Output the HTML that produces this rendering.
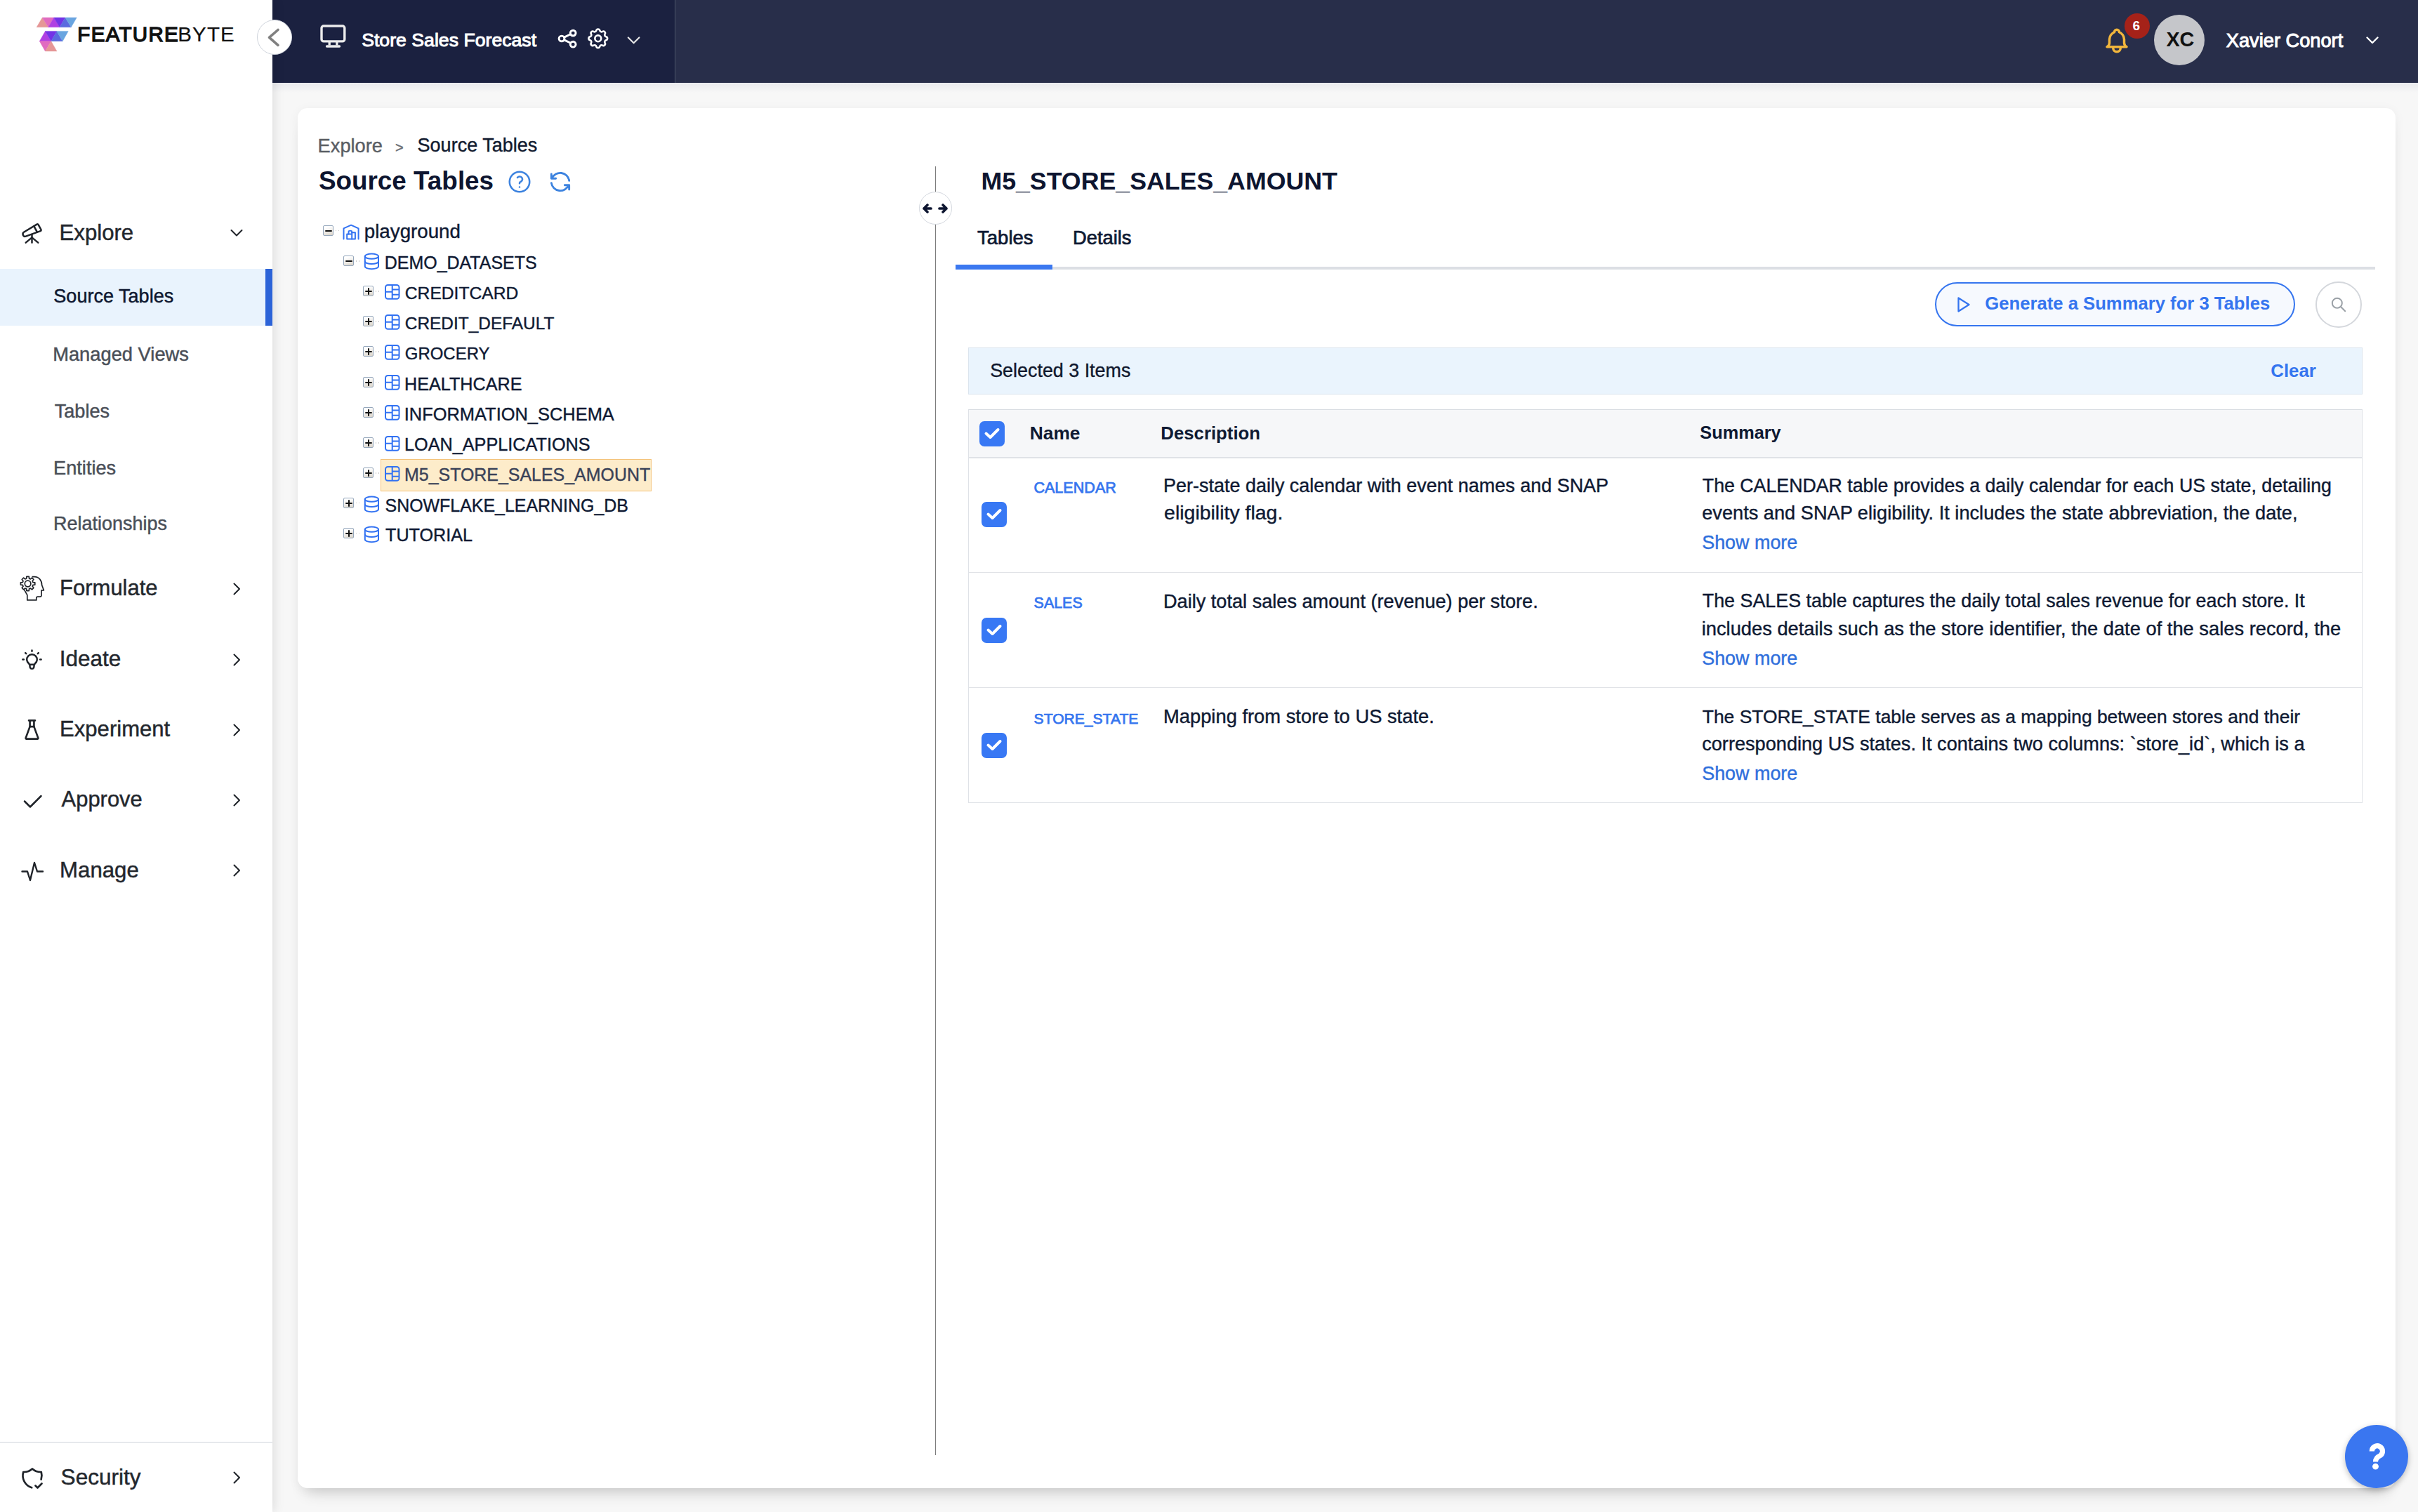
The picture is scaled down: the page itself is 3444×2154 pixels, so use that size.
<!DOCTYPE html>
<html><head><meta charset="utf-8"><title>Source Tables</title>
<style>
html,body{margin:0;padding:0;}
body{width:3444px;height:2154px;overflow:hidden;background:#f7f7f7;position:relative;font-family:"Liberation Sans", sans-serif;}
.t{position:absolute;white-space:nowrap;line-height:1;font-family:"Liberation Sans", sans-serif;}
svg{overflow:visible}
</style></head><body>
<div style="position:absolute;left:388px;top:118px;width:3056px;height:14px;background:linear-gradient(#e9eaee,#f7f7f7)"></div>
<div style="position:absolute;left:424px;top:154px;width:2988px;height:1966px;background:#fff;border-radius:14px;box-shadow:0 3px 16px rgba(0,0,0,0.055),0 18px 22px -12px rgba(0,0,0,0.16)"></div>
<div style="position:absolute;left:388px;top:0px;width:573px;height:118px;background:#1b2140"></div>
<div style="position:absolute;left:961px;top:0px;width:1px;height:118px;background:#4e566b"></div>
<div style="position:absolute;left:962px;top:0px;width:2482px;height:118px;background:#282e4a"></div>
<svg style="position:absolute;left:450px;top:30px;" width="50" height="45" viewBox="450 30 50 45"><rect x="458" y="37" width="32.8" height="21.9" rx="3" fill="none" stroke="#ececec" stroke-width="3.4"/><path d="M469.2 59v5.5M479.9 59v5.5" stroke="#ececec" stroke-width="3.3" fill="none"/><path d="M465.5 66h18" stroke="#ececec" stroke-width="3.3" stroke-linecap="round" fill="none"/></svg>
<div class="t" style="left:515.2px;top:43.9px;font-size:26.67px;font-weight:400;color:#ffffff;-webkit-text-stroke:1.0px #ffffff;">Store Sales Forecast</div>
<svg style="position:absolute;left:780px;top:30px;" width="50" height="50" viewBox="780 30 50 50"><g fill="none" stroke="#fff" stroke-width="2.9"><circle cx="816.2" cy="47.1" r="3.9"/><circle cx="800" cy="55" r="3.9"/><circle cx="816.2" cy="63.2" r="3.9"/><path d="M803.6 53.1l9-4.4M803.6 56.9l9 4.4"/></g></svg>
<svg style="position:absolute;left:834.2px;top:37.2px;" width="35.6" height="35.6" viewBox="0 0 24 24"><g fill="none" stroke="#fff" stroke-width="1.75" stroke-linecap="round" stroke-linejoin="round"><path d="M10.325 4.317c.426 -1.756 2.924 -1.756 3.35 0a1.724 1.724 0 0 0 2.573 1.066c1.543 -.94 3.31 .826 2.37 2.37a1.724 1.724 0 0 0 1.065 2.572c1.756 .426 1.756 2.924 0 3.35a1.724 1.724 0 0 0 -1.066 2.573c.94 1.543 -.826 3.31 -2.37 2.37a1.724 1.724 0 0 0 -2.572 1.065c-.426 1.756 -2.924 1.756 -3.35 0a1.724 1.724 0 0 0 -2.573 -1.066c-1.543 .94 -3.31 -.826 -2.37 -2.37a1.724 1.724 0 0 0 -1.065 -2.572c-1.756 -.426 -1.756 -2.924 0 -3.35a1.724 1.724 0 0 0 1.066 -2.573c-.94 -1.543 .826 -3.31 2.37 -2.37c1 .608 2.296 .07 2.572 -1.065z"/><circle cx="12" cy="12" r="3"/></g></svg>
<svg style="position:absolute;left:880px;top:40px;" width="40" height="30" viewBox="880 40 40 30"><path d="M894.8 53.5l7.8 7.8l7.8-7.8" fill="none" stroke="#e6e6e6" stroke-width="2.2" stroke-linecap="round" stroke-linejoin="round"/></svg>
<svg style="position:absolute;left:2994px;top:37px;" width="42" height="42" viewBox="0 0 24 24"><g fill="none" stroke="#f2b63c" stroke-width="2" stroke-linecap="round" stroke-linejoin="round"><path d="M10 5a2 2 0 1 1 4 0a7 7 0 0 1 4 6v3a4 4 0 0 0 2 3h-16a4 4 0 0 0 2 -3v-3a7 7 0 0 1 4 -6"/><path d="M9 17v1a3 3 0 0 0 6 0v-1"/></g></svg>
<div style="position:absolute;left:3026px;top:19px;width:36px;height:36px;border-radius:50%;background:#a52219"></div>
<div class="t" style="left:3037.5px;top:27.4px;font-size:19.00px;font-weight:700;color:#ffffff;">6</div>
<div style="position:absolute;left:3068px;top:21px;width:72px;height:72px;border-radius:50%;background:#c5c6ca"></div>
<div class="t" style="left:3085.4px;top:42.2px;font-size:28.82px;font-weight:700;color:#111111;">XC</div>
<div class="t" style="left:3170.8px;top:43.5px;font-size:27.23px;font-weight:400;color:#ffffff;-webkit-text-stroke:1.0px #ffffff;">Xavier Conort</div>
<svg style="position:absolute;left:3367px;top:49px;" width="24" height="17" viewBox="0 0 24 17"><path d="M4.5 4.5l7.5 7.5l7.5-7.5" fill="none" stroke="#fff" stroke-width="2.4" stroke-linecap="round" stroke-linejoin="round"/></svg>
<div style="position:absolute;left:0;top:0;width:388px;height:2154px;background:#fff;box-shadow:3px 0 14px rgba(0,0,0,0.10)"></div>
<svg style="position:absolute;left:0px;top:0px;" width="120" height="80" viewBox="0 0 120 80"><path d="M52.1 38.8L60.3 25.1L68.8 38.8Z" fill="#e59797" stroke="#e59797" stroke-width="0.4"/><path d="M60.3 25.1L76.7 25.1L68.8 38.8Z" fill="#e06bc0" stroke="#e06bc0" stroke-width="0.4"/><path d="M68.8 38.8L76.7 25.1L84.9 38.8Z" fill="#b040e2" stroke="#b040e2" stroke-width="0.4"/><path d="M76.7 25.1L93 25.1L84.9 38.8Z" fill="#7333e6" stroke="#7333e6" stroke-width="0.4"/><path d="M84.9 38.8L93 25.1L101.3 38.8Z" fill="#5b6adf" stroke="#5b6adf" stroke-width="0.4"/><path d="M93 25.1L109.3 25.1L101.3 38.8Z" fill="#6aa5e0" stroke="#6aa5e0" stroke-width="0.4"/><path d="M56.3 58.7L64.4 44.4L72.8 58.7Z" fill="#b040e2" stroke="#b040e2" stroke-width="0.4"/><path d="M64.4 44.4L80.9 44.4L72.8 58.7Z" fill="#7333e6" stroke="#7333e6" stroke-width="0.4"/><path d="M72.8 58.7L80.9 44.4L89.2 58.7Z" fill="#5b6adf" stroke="#5b6adf" stroke-width="0.4"/><path d="M80.9 44.4L97.2 44.4L89.2 58.7Z" fill="#6aa5e0" stroke="#6aa5e0" stroke-width="0.4"/><path d="M56.3 58.7L72.8 58.7L64.4 73Z" fill="#e06bc0" stroke="#e06bc0" stroke-width="0.4"/><path d="M64.4 73L72.8 58.7L81 73Z" fill="#e59797" stroke="#e59797" stroke-width="0.4"/></svg>
<div class="t" style="left:110.3px;top:33.9px;font-size:29.50px;font-weight:400;color:#111111;-webkit-text-stroke:1.4px #111111;letter-spacing:1.33px;">FEATURE</div>
<div class="t" style="left:253.3px;top:33.9px;font-size:29.50px;font-weight:400;color:#111111;-webkit-text-stroke:0.2px #111111;letter-spacing:1.13px;">BYTE</div>
<div style="position:absolute;left:366px;top:28px;width:48px;height:48px;border-radius:50%;background:#fff;border:1px solid #cfd4dc"></div>
<svg style="position:absolute;left:370px;top:33px;" width="40" height="40" viewBox="370 33 40 40"><path d="M396 42.5l-12.5 10.8l12.5 11" fill="none" stroke="#808080" stroke-width="3.6" stroke-linecap="round" stroke-linejoin="round"/></svg>
<svg style="position:absolute;left:28px;top:315px;" width="35" height="35" viewBox="0 0 24 24"><g fill="none" stroke="#1f2329" stroke-width="1.7" stroke-linecap="round" stroke-linejoin="round"><path d="M6 21l6 -5l6 5"/><path d="M12 13v8"/><path d="M3.294 13.678l.166 .281c.52 .88 1.624 1.265 2.605 .91l14.242 -5.165a1.023 1.023 0 0 0 .565 -1.456l-2.62 -4.705a1.087 1.087 0 0 0 -1.447 -.42l-.056 .033l-12.694 7.618c-.88 .528 -1.179 1.667 -.76 2.904z"/><path d="M14 5l3 5.5"/></g></svg>
<div class="t" style="left:84.5px;top:316.2px;font-size:31.18px;font-weight:400;color:#23272d;-webkit-text-stroke:0.45px #23272d;">Explore</div>
<svg style="position:absolute;left:326px;top:322px;" width="22" height="20" viewBox="0 0 22 20"><path d="M3.5 6l7.5 7.5l7.5-7.5" fill="none" stroke="#1f2329" stroke-width="2" stroke-linecap="round" stroke-linejoin="round"/></svg>
<div style="position:absolute;left:0px;top:383px;width:388px;height:81px;background:#e9f3fd"></div>
<div style="position:absolute;left:378px;top:383px;width:10px;height:81px;background:#2c63d8"></div>
<div class="t" style="left:76.3px;top:409.1px;font-size:27.05px;font-weight:400;color:#0e1730;-webkit-text-stroke:0.45px #0e1730;">Source Tables</div>
<div class="t" style="left:75.2px;top:490.9px;font-size:27.31px;font-weight:400;color:#4a4f58;-webkit-text-stroke:0.45px #4a4f58;">Managed Views</div>
<div class="t" style="left:77.7px;top:571.5px;font-size:27.14px;font-weight:400;color:#4a4f58;-webkit-text-stroke:0.45px #4a4f58;">Tables</div>
<div class="t" style="left:76.1px;top:652.5px;font-size:27.17px;font-weight:400;color:#4a4f58;-webkit-text-stroke:0.45px #4a4f58;">Entities</div>
<div class="t" style="left:76.1px;top:733.2px;font-size:26.96px;font-weight:400;color:#4a4f58;-webkit-text-stroke:0.45px #4a4f58;">Relationships</div>
<div class="t" style="left:85.1px;top:822.4px;font-size:30.99px;font-weight:400;color:#23272d;-webkit-text-stroke:0.45px #23272d;">Formulate</div>
<svg style="position:absolute;left:326px;top:827.0px;" width="22" height="24" viewBox="0 0 22 24"><path d="M7.5 4.5l7.5 7.5l-7.5 7.5" fill="none" stroke="#1f2329" stroke-width="2" stroke-linecap="round" stroke-linejoin="round"/></svg>
<div class="t" style="left:84.8px;top:922.7px;font-size:31.50px;font-weight:400;color:#23272d;-webkit-text-stroke:0.45px #23272d;">Ideate</div>
<svg style="position:absolute;left:326px;top:927.8px;" width="22" height="24" viewBox="0 0 22 24"><path d="M7.5 4.5l7.5 7.5l-7.5 7.5" fill="none" stroke="#1f2329" stroke-width="2" stroke-linecap="round" stroke-linejoin="round"/></svg>
<div class="t" style="left:85.1px;top:1023.3px;font-size:31.07px;font-weight:400;color:#23272d;-webkit-text-stroke:0.45px #23272d;">Experiment</div>
<svg style="position:absolute;left:326px;top:1028.0px;" width="22" height="24" viewBox="0 0 22 24"><path d="M7.5 4.5l7.5 7.5l-7.5 7.5" fill="none" stroke="#1f2329" stroke-width="2" stroke-linecap="round" stroke-linejoin="round"/></svg>
<div class="t" style="left:87.6px;top:1123.6px;font-size:30.93px;font-weight:400;color:#23272d;-webkit-text-stroke:0.45px #23272d;">Approve</div>
<svg style="position:absolute;left:326px;top:1128.2px;" width="22" height="24" viewBox="0 0 22 24"><path d="M7.5 4.5l7.5 7.5l-7.5 7.5" fill="none" stroke="#1f2329" stroke-width="2" stroke-linecap="round" stroke-linejoin="round"/></svg>
<div class="t" style="left:85.1px;top:1223.6px;font-size:31.19px;font-weight:400;color:#23272d;-webkit-text-stroke:0.45px #23272d;">Manage</div>
<svg style="position:absolute;left:326px;top:1228.4px;" width="22" height="24" viewBox="0 0 22 24"><path d="M7.5 4.5l7.5 7.5l-7.5 7.5" fill="none" stroke="#1f2329" stroke-width="2" stroke-linecap="round" stroke-linejoin="round"/></svg>
<svg style="position:absolute;left:20px;top:812px;" width="50" height="50" viewBox="0 0 50 50"><g fill="none" stroke="#1f2329" stroke-width="1.7" stroke-linejoin="round"><path d="M25.5 9.6 L29 9.6 C35.5 9.8 39.6 14.8 39.6 21.5 L42.4 28.9 L39 28.9 L39 36 Q39 38.2 36.8 38.2 L33.6 38.2 Q31.8 38.2 31.8 40 L31.8 42.9 L18.8 42.9 L18.8 35.6 L14.2 27.6"/><path d="M26.95 17.55 L29.76 17.81 L29.76 21.19 L26.95 21.45 L26.17 23.32 L27.98 25.49 L25.59 27.88 L23.42 26.07 L21.55 26.85 L21.29 29.66 L17.91 29.66 L17.65 26.85 L15.78 26.07 L13.61 27.88 L11.22 25.49 L13.03 23.32 L12.25 21.45 L9.44 21.19 L9.44 17.81 L12.25 17.55 L13.03 15.68 L11.22 13.51 L13.61 11.12 L15.78 12.93 L17.65 12.15 L17.91 9.34 L21.29 9.34 L21.55 12.15 L23.42 12.93 L25.59 11.12 L27.98 13.51 L26.17 15.68Z"/><circle cx="19.6" cy="19.5" r="4.3"/></g></svg>
<svg style="position:absolute;left:28px;top:922px;" width="35" height="35" viewBox="0 0 24 24"><g fill="none" stroke="#1f2329" stroke-width="1.7" stroke-linecap="round" stroke-linejoin="round"><path d="M3 12h1m8 -9v1m8 8h1m-15.4 -6.4l.7 .7m12.1 -.7l-.7 .7"/><path d="M9 16a5 5 0 1 1 6 0a3.5 3.5 0 0 0 -1 3a2 2 0 0 1 -4 0a3.5 3.5 0 0 0 -1 -3"/><path d="M9.7 17l4.6 0"/></g></svg>
<svg style="position:absolute;left:28px;top:1022px;" width="35" height="35" viewBox="0 0 24 24"><g fill="none" stroke="#1f2329" stroke-width="1.8" stroke-linecap="round" stroke-linejoin="round"><path d="M9 3l6 0"/><path d="M10 3v6l-4 11a.7 .7 0 0 0 .5 1h11a.7 .7 0 0 0 .5 -1l-4 -11v-6"/><path d="M10 9h4"/></g></svg>
<svg style="position:absolute;left:31px;top:1125px;" width="32" height="32" viewBox="0 0 32 32"><path d="M4 16.5l8 8l15.5-15.5" fill="none" stroke="#1f2329" stroke-width="2.5" stroke-linecap="round" stroke-linejoin="round"/></svg>
<svg style="position:absolute;left:29px;top:1225px;" width="34" height="34" viewBox="0 0 34 34"><path d="M2.5 16.5h7.5l4 12.5l6-25l4 12.5h8" fill="none" stroke="#1f2329" stroke-width="2.4" stroke-linecap="round" stroke-linejoin="round"/></svg>
<div style="position:absolute;left:0px;top:2053.5px;width:388px;height:1.5px;background:#cfd4db"></div>
<svg style="position:absolute;left:28px;top:2088px;" width="36" height="36" viewBox="0 0 24 24"><g fill="none" stroke="#1f2329" stroke-width="1.8" stroke-linecap="round" stroke-linejoin="round"><path d="M11.46 20.846a12 12 0 0 1 -7.96 -14.846a12 12 0 0 0 8.5 -3a12 12 0 0 0 8.5 3a12 12 0 0 1 -.09 7.06"/><path d="M15 19l2 2l4 -4"/></g></svg>
<div class="t" style="left:86.6px;top:2088.7px;font-size:31.55px;font-weight:400;color:#23272d;-webkit-text-stroke:0.45px #23272d;">Security</div>
<svg style="position:absolute;left:326px;top:2093px;" width="22" height="24" viewBox="0 0 22 24"><path d="M7.5 4.5l7.5 7.5l-7.5 7.5" fill="none" stroke="#1f2329" stroke-width="2" stroke-linecap="round" stroke-linejoin="round"/></svg>
<div class="t" style="left:452.6px;top:194.1px;font-size:27.24px;font-weight:400;color:#5a5e64;-webkit-text-stroke:0.4px #5a5e64;">Explore</div>
<div class="t" style="left:563.0px;top:200.1px;font-size:20.00px;font-weight:400;color:#6a6e74;-webkit-text-stroke:0.4px #6a6e74;">&gt;</div>
<div class="t" style="left:594.6px;top:194.3px;font-size:27.01px;font-weight:400;color:#111a2e;-webkit-text-stroke:0.4px #111a2e;">Source Tables</div>
<div class="t" style="left:453.9px;top:240.1px;font-size:36.86px;font-weight:700;color:#0d1530;">Source Tables</div>
<svg style="position:absolute;left:722px;top:241px;" width="36" height="36" viewBox="0 0 24 24"><g fill="none" stroke="#3d83df" stroke-width="1.7" stroke-linecap="round" stroke-linejoin="round"><circle cx="12" cy="12" r="9.5"/><path d="M12 17v.01"/><path d="M12 13.5a1.5 1.5 0 0 1 1 -1.5a2.6 2.6 0 1 0 -3 -4"/></g></svg>
<svg style="position:absolute;left:779px;top:240px;" width="38" height="38" viewBox="0 0 24 24"><g fill="none" stroke="#3d83df" stroke-width="1.8" stroke-linecap="round" stroke-linejoin="round"><path d="M20 11a8.1 8.1 0 0 0 -15.5 -2m-.5 -4v4h4"/><path d="M4 13a8.1 8.1 0 0 0 15.5 2m.5 4v-4h-4"/></g></svg>
<div style="position:absolute;left:459.8px;top:320.6px;width:13px;height:13px;border:1.5px solid #95a7bc;border-radius:2px;background:linear-gradient(160deg,#ffffff 20%,#d9d3c9)"></div>
<svg style="position:absolute;left:457.8px;top:318.6px" width="20" height="20" viewBox="457.8 318.6 20 20"><path d="M463.1 328.6h9.4" stroke="#111" stroke-width="2"/></svg>
<div style="position:absolute;left:477.8px;top:327.6px;width:1.5px;height:1.5px;background:#c8c8c8"></div><div style="position:absolute;left:481.8px;top:327.6px;width:1.5px;height:1.5px;background:#c8c8c8"></div>
<svg style="position:absolute;left:486.2px;top:315.6px;" width="28.1" height="28.1" viewBox="0 0 24 24"><g fill="none" stroke="#3272f2" stroke-width="1.7" stroke-linecap="round" stroke-linejoin="round"><path d="M3 21v-13l9 -4l9 4v13"/><path d="M13 13h4v8h-10v-6h6"/><path d="M13 21v-9a1 1 0 0 0 -1 -1h-2a1 1 0 0 0 -1 1v3"/></g></svg>
<div class="t" style="left:518.8px;top:316.0px;font-size:27.73px;font-weight:400;color:#0f1a33;-webkit-text-stroke:0.4px #0f1a33;">playground</div>
<div style="position:absolute;left:488.5px;top:364px;width:13px;height:13px;border:1.5px solid #95a7bc;border-radius:2px;background:linear-gradient(160deg,#ffffff 20%,#d9d3c9)"></div>
<svg style="position:absolute;left:486.5px;top:362px" width="20" height="20" viewBox="486.5 362 20 20"><path d="M491.8 372h9.4" stroke="#111" stroke-width="2"/></svg>
<div style="position:absolute;left:506.5px;top:371px;width:1.5px;height:1.5px;background:#c8c8c8"></div><div style="position:absolute;left:510.5px;top:371px;width:1.5px;height:1.5px;background:#c8c8c8"></div>
<svg style="position:absolute;left:514.7px;top:357.9px;" width="28.8" height="28.8" viewBox="0 0 24 24"><g fill="none" stroke="#3272f2" stroke-width="1.67" stroke-linecap="round" stroke-linejoin="round"><path d="M12 6m-8 0a8 3 0 1 0 16 0a8 3 0 1 0 -16 0"/><path d="M4 6v6a8 3 0 0 0 16 0v-6"/><path d="M4 12v6a8 3 0 0 0 16 0v-6"/></g></svg>
<div class="t" style="left:547.8px;top:361.9px;font-size:24.96px;font-weight:400;color:#0f1a33;-webkit-text-stroke:0.4px #0f1a33;">DEMO_DATASETS</div>
<div style="position:absolute;left:516.7px;top:407.1px;width:13px;height:13px;border:1.5px solid #95a7bc;border-radius:2px;background:linear-gradient(160deg,#ffffff 20%,#d9d3c9)"></div>
<svg style="position:absolute;left:514.7px;top:405.1px" width="20" height="20" viewBox="514.7 405.1 20 20"><path d="M520.0 415.1h9.4" stroke="#111" stroke-width="2"/><path d="M524.7 410.40000000000003v9.4" stroke="#111" stroke-width="2"/></svg>
<div style="position:absolute;left:534.7px;top:414.1px;width:1.5px;height:1.5px;background:#c8c8c8"></div><div style="position:absolute;left:538.7px;top:414.1px;width:1.5px;height:1.5px;background:#c8c8c8"></div>
<svg style="position:absolute;left:545.7px;top:402.9px" width="26" height="26" viewBox="-2 -2 26 26"><g fill="none" stroke="#3272f2" stroke-width="2"><rect x="1" y="1" width="19.5" height="19.7" rx="3.5"/><path d="M10.7 1v19.7M1 10.8h9.7M10.7 7.5h9.8M10.7 14.7h9.8"/></g></svg>
<div class="t" style="left:576.8px;top:405.6px;font-size:24.65px;font-weight:400;color:#0f1a33;-webkit-text-stroke:0.4px #0f1a33;">CREDITCARD</div>
<div style="position:absolute;left:516.7px;top:450.0px;width:13px;height:13px;border:1.5px solid #95a7bc;border-radius:2px;background:linear-gradient(160deg,#ffffff 20%,#d9d3c9)"></div>
<svg style="position:absolute;left:514.7px;top:448.0px" width="20" height="20" viewBox="514.7 448.0 20 20"><path d="M520.0 458.0h9.4" stroke="#111" stroke-width="2"/><path d="M524.7 453.3v9.4" stroke="#111" stroke-width="2"/></svg>
<div style="position:absolute;left:534.7px;top:457.0px;width:1.5px;height:1.5px;background:#c8c8c8"></div><div style="position:absolute;left:538.7px;top:457.0px;width:1.5px;height:1.5px;background:#c8c8c8"></div>
<svg style="position:absolute;left:545.7px;top:445.79999999999995px" width="26" height="26" viewBox="-2 -2 26 26"><g fill="none" stroke="#3272f2" stroke-width="2"><rect x="1" y="1" width="19.5" height="19.7" rx="3.5"/><path d="M10.7 1v19.7M1 10.8h9.7M10.7 7.5h9.8M10.7 14.7h9.8"/></g></svg>
<div class="t" style="left:576.8px;top:448.7px;font-size:24.43px;font-weight:400;color:#0f1a33;-webkit-text-stroke:0.4px #0f1a33;">CREDIT_DEFAULT</div>
<div style="position:absolute;left:516.7px;top:493.1px;width:13px;height:13px;border:1.5px solid #95a7bc;border-radius:2px;background:linear-gradient(160deg,#ffffff 20%,#d9d3c9)"></div>
<svg style="position:absolute;left:514.7px;top:491.1px" width="20" height="20" viewBox="514.7 491.1 20 20"><path d="M520.0 501.1h9.4" stroke="#111" stroke-width="2"/><path d="M524.7 496.40000000000003v9.4" stroke="#111" stroke-width="2"/></svg>
<div style="position:absolute;left:534.7px;top:500.1px;width:1.5px;height:1.5px;background:#c8c8c8"></div><div style="position:absolute;left:538.7px;top:500.1px;width:1.5px;height:1.5px;background:#c8c8c8"></div>
<svg style="position:absolute;left:545.7px;top:488.9px" width="26" height="26" viewBox="-2 -2 26 26"><g fill="none" stroke="#3272f2" stroke-width="2"><rect x="1" y="1" width="19.5" height="19.7" rx="3.5"/><path d="M10.7 1v19.7M1 10.8h9.7M10.7 7.5h9.8M10.7 14.7h9.8"/></g></svg>
<div class="t" style="left:576.8px;top:492.2px;font-size:23.96px;font-weight:400;color:#0f1a33;-webkit-text-stroke:0.4px #0f1a33;">GROCERY</div>
<div style="position:absolute;left:516.7px;top:536.6px;width:13px;height:13px;border:1.5px solid #95a7bc;border-radius:2px;background:linear-gradient(160deg,#ffffff 20%,#d9d3c9)"></div>
<svg style="position:absolute;left:514.7px;top:534.6px" width="20" height="20" viewBox="514.7 534.6 20 20"><path d="M520.0 544.6h9.4" stroke="#111" stroke-width="2"/><path d="M524.7 539.9v9.4" stroke="#111" stroke-width="2"/></svg>
<div style="position:absolute;left:534.7px;top:543.6px;width:1.5px;height:1.5px;background:#c8c8c8"></div><div style="position:absolute;left:538.7px;top:543.6px;width:1.5px;height:1.5px;background:#c8c8c8"></div>
<svg style="position:absolute;left:545.7px;top:532.4px" width="26" height="26" viewBox="-2 -2 26 26"><g fill="none" stroke="#3272f2" stroke-width="2"><rect x="1" y="1" width="19.5" height="19.7" rx="3.5"/><path d="M10.7 1v19.7M1 10.8h9.7M10.7 7.5h9.8M10.7 14.7h9.8"/></g></svg>
<div class="t" style="left:576.0px;top:534.7px;font-size:25.20px;font-weight:400;color:#0f1a33;-webkit-text-stroke:0.4px #0f1a33;">HEALTHCARE</div>
<div style="position:absolute;left:516.7px;top:579.6px;width:13px;height:13px;border:1.5px solid #95a7bc;border-radius:2px;background:linear-gradient(160deg,#ffffff 20%,#d9d3c9)"></div>
<svg style="position:absolute;left:514.7px;top:577.6px" width="20" height="20" viewBox="514.7 577.6 20 20"><path d="M520.0 587.6h9.4" stroke="#111" stroke-width="2"/><path d="M524.7 582.9v9.4" stroke="#111" stroke-width="2"/></svg>
<div style="position:absolute;left:534.7px;top:586.6px;width:1.5px;height:1.5px;background:#c8c8c8"></div><div style="position:absolute;left:538.7px;top:586.6px;width:1.5px;height:1.5px;background:#c8c8c8"></div>
<svg style="position:absolute;left:545.7px;top:575.4px" width="26" height="26" viewBox="-2 -2 26 26"><g fill="none" stroke="#3272f2" stroke-width="2"><rect x="1" y="1" width="19.5" height="19.7" rx="3.5"/><path d="M10.7 1v19.7M1 10.8h9.7M10.7 7.5h9.8M10.7 14.7h9.8"/></g></svg>
<div class="t" style="left:575.7px;top:577.5px;font-size:25.44px;font-weight:400;color:#0f1a33;-webkit-text-stroke:0.4px #0f1a33;">INFORMATION_SCHEMA</div>
<div style="position:absolute;left:516.7px;top:623.2px;width:13px;height:13px;border:1.5px solid #95a7bc;border-radius:2px;background:linear-gradient(160deg,#ffffff 20%,#d9d3c9)"></div>
<svg style="position:absolute;left:514.7px;top:621.2px" width="20" height="20" viewBox="514.7 621.2 20 20"><path d="M520.0 631.2h9.4" stroke="#111" stroke-width="2"/><path d="M524.7 626.5v9.4" stroke="#111" stroke-width="2"/></svg>
<div style="position:absolute;left:534.7px;top:630.2px;width:1.5px;height:1.5px;background:#c8c8c8"></div><div style="position:absolute;left:538.7px;top:630.2px;width:1.5px;height:1.5px;background:#c8c8c8"></div>
<svg style="position:absolute;left:545.7px;top:619.0px" width="26" height="26" viewBox="-2 -2 26 26"><g fill="none" stroke="#3272f2" stroke-width="2"><rect x="1" y="1" width="19.5" height="19.7" rx="3.5"/><path d="M10.7 1v19.7M1 10.8h9.7M10.7 7.5h9.8M10.7 14.7h9.8"/></g></svg>
<div class="t" style="left:576.0px;top:621.2px;font-size:25.24px;font-weight:400;color:#0f1a33;-webkit-text-stroke:0.4px #0f1a33;">LOAN_APPLICATIONS</div>
<div style="position:absolute;left:542px;top:654px;width:386px;height:46px;background:#fdecca;border:1.5px solid #f4c37a;box-sizing:border-box"></div>
<div style="position:absolute;left:516.7px;top:666.1px;width:13px;height:13px;border:1.5px solid #95a7bc;border-radius:2px;background:linear-gradient(160deg,#ffffff 20%,#d9d3c9)"></div>
<svg style="position:absolute;left:514.7px;top:664.1px" width="20" height="20" viewBox="514.7 664.1 20 20"><path d="M520.0 674.1h9.4" stroke="#111" stroke-width="2"/><path d="M524.7 669.4v9.4" stroke="#111" stroke-width="2"/></svg>
<div style="position:absolute;left:534.7px;top:673.1px;width:1.5px;height:1.5px;background:#c8c8c8"></div><div style="position:absolute;left:538.7px;top:673.1px;width:1.5px;height:1.5px;background:#c8c8c8"></div>
<svg style="position:absolute;left:545.7px;top:661.9px" width="26" height="26" viewBox="-2 -2 26 26"><g fill="none" stroke="#3272f2" stroke-width="2"><rect x="1" y="1" width="19.5" height="19.7" rx="3.5"/><path d="M10.7 1v19.7M1 10.8h9.7M10.7 7.5h9.8M10.7 14.7h9.8"/></g></svg>
<div class="t" style="left:576.0px;top:664.4px;font-size:24.94px;font-weight:400;color:#3a4258;-webkit-text-stroke:0.4px #3a4258;">M5_STORE_SALES_AMOUNT</div>
<div style="position:absolute;left:488.5px;top:708.6px;width:13px;height:13px;border:1.5px solid #95a7bc;border-radius:2px;background:linear-gradient(160deg,#ffffff 20%,#d9d3c9)"></div>
<svg style="position:absolute;left:486.5px;top:706.6px" width="20" height="20" viewBox="486.5 706.6 20 20"><path d="M491.8 716.6h9.4" stroke="#111" stroke-width="2"/><path d="M496.5 711.9v9.4" stroke="#111" stroke-width="2"/></svg>
<div style="position:absolute;left:506.5px;top:715.6px;width:1.5px;height:1.5px;background:#c8c8c8"></div><div style="position:absolute;left:510.5px;top:715.6px;width:1.5px;height:1.5px;background:#c8c8c8"></div>
<svg style="position:absolute;left:514.7px;top:703.5px;" width="28.8" height="28.8" viewBox="0 0 24 24"><g fill="none" stroke="#3272f2" stroke-width="1.67" stroke-linecap="round" stroke-linejoin="round"><path d="M12 6m-8 0a8 3 0 1 0 16 0a8 3 0 1 0 -16 0"/><path d="M4 6v6a8 3 0 0 0 16 0v-6"/><path d="M4 12v6a8 3 0 0 0 16 0v-6"/></g></svg>
<div class="t" style="left:548.5px;top:707.5px;font-size:24.95px;font-weight:400;color:#0f1a33;-webkit-text-stroke:0.4px #0f1a33;">SNOWFLAKE_LEARNING_DB</div>
<div style="position:absolute;left:488.5px;top:751.7px;width:13px;height:13px;border:1.5px solid #95a7bc;border-radius:2px;background:linear-gradient(160deg,#ffffff 20%,#d9d3c9)"></div>
<svg style="position:absolute;left:486.5px;top:749.7px" width="20" height="20" viewBox="486.5 749.7 20 20"><path d="M491.8 759.7h9.4" stroke="#111" stroke-width="2"/><path d="M496.5 755.0v9.4" stroke="#111" stroke-width="2"/></svg>
<div style="position:absolute;left:506.5px;top:758.7px;width:1.5px;height:1.5px;background:#c8c8c8"></div><div style="position:absolute;left:510.5px;top:758.7px;width:1.5px;height:1.5px;background:#c8c8c8"></div>
<svg style="position:absolute;left:514.7px;top:746.6px;" width="28.8" height="28.8" viewBox="0 0 24 24"><g fill="none" stroke="#3272f2" stroke-width="1.67" stroke-linecap="round" stroke-linejoin="round"><path d="M12 6m-8 0a8 3 0 1 0 16 0a8 3 0 1 0 -16 0"/><path d="M4 6v6a8 3 0 0 0 16 0v-6"/><path d="M4 12v6a8 3 0 0 0 16 0v-6"/></g></svg>
<div class="t" style="left:549.0px;top:750.4px;font-size:25.20px;font-weight:400;color:#0f1a33;-webkit-text-stroke:0.4px #0f1a33;">TUTORIAL</div>
<div style="position:absolute;left:1331.8px;top:237px;width:1.400000000000091px;height:1836px;background:#7c7c7c"></div>
<div style="position:absolute;left:1309px;top:273px;width:45px;height:45px;border-radius:50%;background:#fff;border:1px solid #d3d7de"></div>
<svg style="position:absolute;left:1312px;top:283px;" width="40" height="28" viewBox="0 0 40 28"><g fill="none" stroke="#0d1530" stroke-width="3.7" stroke-linecap="round" stroke-linejoin="round"><path d="M4 14h10M9 9l-5 5l5 5"/><path d="M36 14h-10M31 9l5 5l-5 5"/></g></svg>
<div class="t" style="left:1397.4px;top:240.8px;font-size:35.72px;font-weight:700;color:#0d1530;">M5_STORE_SALES_AMOUNT</div>
<div class="t" style="left:1392.1px;top:324.9px;font-size:27.49px;font-weight:400;color:#0f1a33;-webkit-text-stroke:0.7px #0f1a33;">Tables</div>
<div class="t" style="left:1528.0px;top:325.1px;font-size:27.32px;font-weight:400;color:#0f1a33;-webkit-text-stroke:0.7px #0f1a33;">Details</div>
<div style="position:absolute;left:1361px;top:380px;width:2022px;height:4px;background:#dcdfe4"></div>
<div style="position:absolute;left:1361px;top:377px;width:138px;height:7px;background:#3b78f0"></div>
<div style="position:absolute;left:2756px;top:402px;width:513px;height:63px;box-sizing:border-box;border-radius:32px;border:2px solid #3575ef;background:#f6f9fe"></div>
<svg style="position:absolute;left:2785px;top:421px;" width="24" height="25" viewBox="0 0 24 25"><path d="M4.5 3.5l15 9.5l-15 9.5z" fill="none" stroke="#3575ef" stroke-width="2.3" stroke-linejoin="round"/></svg>
<div class="t" style="left:2827.3px;top:420.3px;font-size:25.67px;font-weight:700;color:#3575ef;">Generate a Summary for 3 Tables</div>
<div style="position:absolute;left:3298px;top:401px;width:66px;height:66px;box-sizing:border-box;border-radius:50%;border:2px solid #d4d7dc;background:#fff"></div>
<svg style="position:absolute;left:3318px;top:421px;" width="26" height="26" viewBox="0 0 24 24"><g fill="none" stroke="#9aa0a6" stroke-width="1.8" stroke-linecap="round"><circle cx="10" cy="10" r="6.5"/><path d="M15 15l5.5 5.5"/></g></svg>
<div style="position:absolute;left:1379px;top:495px;width:1986px;height:67px;box-sizing:border-box;background:#eaf4fd;border:1.5px solid #dbe5ee"></div>
<div class="t" style="left:1410.2px;top:514.5px;font-size:26.89px;font-weight:400;color:#10182e;-webkit-text-stroke:0.35px #10182e;">Selected 3 Items</div>
<div class="t" style="left:3234.3px;top:515.6px;font-size:25.77px;font-weight:700;color:#3575ef;">Clear</div>
<div style="position:absolute;left:1379px;top:583px;width:1986px;height:561px;box-sizing:border-box;border:1.5px solid #dfe2e7;border-top-color:#d8dce2"></div>
<div style="position:absolute;left:1380px;top:584px;width:1984px;height:67px;background:#f6f7f9"></div>
<div style="position:absolute;left:1380px;top:651px;width:1984px;height:1.5px;background:#dfe2e7"></div>
<div style="position:absolute;left:1380px;top:815px;width:1984px;height:1.3999999999999773px;background:#e0e3e7"></div>
<div style="position:absolute;left:1380px;top:979px;width:1984px;height:1.3999999999999773px;background:#e0e3e7"></div>
<svg style="position:absolute;left:1395px;top:600px;" width="36" height="36" viewBox="0 0 36 36"><rect x="0" y="0" width="36" height="36" rx="7" fill="#3878f4"/><path d="M9.5 17.5l6 5.5l11-11" fill="none" stroke="#fff" stroke-width="4" stroke-linecap="round" stroke-linejoin="round"/></svg>
<div class="t" style="left:1466.7px;top:604.0px;font-size:26.39px;font-weight:700;color:#0f1a33;">Name</div>
<div class="t" style="left:1653.3px;top:604.5px;font-size:25.78px;font-weight:700;color:#0f1a33;">Description</div>
<div class="t" style="left:2421.3px;top:604.2px;font-size:25.32px;font-weight:700;color:#0f1a33;">Summary</div>
<svg style="position:absolute;left:1398px;top:715px;" width="36" height="36" viewBox="0 0 36 36"><rect x="0" y="0" width="36" height="36" rx="7" fill="#3878f4"/><path d="M9.5 17.5l6 5.5l11-11" fill="none" stroke="#fff" stroke-width="4" stroke-linecap="round" stroke-linejoin="round"/></svg>
<div class="t" style="left:1472.4px;top:684.1px;font-size:21.59px;font-weight:400;color:#3575ef;-webkit-text-stroke:0.75px #3575ef;">CALENDAR</div>
<div class="t" style="left:1657.0px;top:678.6px;font-size:26.98px;font-weight:400;color:#0f1a33;-webkit-text-stroke:0.4px #0f1a33;">Per-state daily calendar with event names and SNAP</div>
<div class="t" style="left:1658.1px;top:715.8px;font-size:28.46px;font-weight:400;color:#0f1a33;-webkit-text-stroke:0.4px #0f1a33;">eligibility flag.</div>
<div class="t" style="left:2424.8px;top:678.9px;font-size:26.74px;font-weight:400;color:#0f1a33;-webkit-text-stroke:0.4px #0f1a33;">The CALENDAR table provides a daily calendar for each US state, detailing</div>
<div class="t" style="left:2424.2px;top:717.3px;font-size:27.20px;font-weight:400;color:#0f1a33;-webkit-text-stroke:0.4px #0f1a33;">events and SNAP eligibility. It includes the state abbreviation, the date,</div>
<div class="t" style="left:2424.2px;top:760.2px;font-size:26.92px;font-weight:400;color:#2f6fdc;-webkit-text-stroke:0.4px #2f6fdc;">Show more</div>
<svg style="position:absolute;left:1398px;top:879.5px;" width="36" height="36" viewBox="0 0 36 36"><rect x="0" y="0" width="36" height="36" rx="7" fill="#3878f4"/><path d="M9.5 17.5l6 5.5l11-11" fill="none" stroke="#fff" stroke-width="4" stroke-linecap="round" stroke-linejoin="round"/></svg>
<div class="t" style="left:1472.6px;top:848.7px;font-size:21.45px;font-weight:400;color:#3575ef;-webkit-text-stroke:0.75px #3575ef;">SALES</div>
<div class="t" style="left:1657.0px;top:842.9px;font-size:27.14px;font-weight:400;color:#0f1a33;-webkit-text-stroke:0.4px #0f1a33;">Daily total sales amount (revenue) per store.</div>
<div class="t" style="left:2424.8px;top:843.3px;font-size:26.85px;font-weight:400;color:#0f1a33;-webkit-text-stroke:0.4px #0f1a33;">The SALES table captures the daily total sales revenue for each store. It</div>
<div class="t" style="left:2423.7px;top:881.7px;font-size:27.31px;font-weight:400;color:#0f1a33;-webkit-text-stroke:0.4px #0f1a33;">includes details such as the store identifier, the date of the sales record, the</div>
<div class="t" style="left:2424.2px;top:924.7px;font-size:26.92px;font-weight:400;color:#2f6fdc;-webkit-text-stroke:0.4px #2f6fdc;">Show more</div>
<svg style="position:absolute;left:1398px;top:1043.5px;" width="36" height="36" viewBox="0 0 36 36"><rect x="0" y="0" width="36" height="36" rx="7" fill="#3878f4"/><path d="M9.5 17.5l6 5.5l11-11" fill="none" stroke="#fff" stroke-width="4" stroke-linecap="round" stroke-linejoin="round"/></svg>
<div class="t" style="left:1472.6px;top:1013.0px;font-size:21.09px;font-weight:400;color:#3575ef;-webkit-text-stroke:0.75px #3575ef;">STORE_STATE</div>
<div class="t" style="left:1657.0px;top:1006.8px;font-size:27.34px;font-weight:400;color:#0f1a33;-webkit-text-stroke:0.4px #0f1a33;">Mapping from store to US state.</div>
<div class="t" style="left:2424.8px;top:1007.6px;font-size:26.42px;font-weight:400;color:#0f1a33;-webkit-text-stroke:0.4px #0f1a33;">The STORE_STATE table serves as a mapping between stores and their</div>
<div class="t" style="left:2424.2px;top:1045.8px;font-size:27.15px;font-weight:400;color:#0f1a33;-webkit-text-stroke:0.4px #0f1a33;">corresponding US states. It contains two columns: `store_id`, which is a</div>
<div class="t" style="left:2424.2px;top:1088.7px;font-size:26.92px;font-weight:400;color:#2f6fdc;-webkit-text-stroke:0.4px #2f6fdc;">Show more</div>
<div style="position:absolute;left:3340px;top:2030px;width:90px;height:90px;border-radius:50%;background:#3a76f0;box-shadow:0 3px 8px rgba(0,0,0,0.25)"></div>
<svg style="position:absolute;left:3340px;top:2030px" width="90" height="90" viewBox="3340 2030 90 90"><path d="M3378.3 2067.4A7.6 7.6 0 1 1 3390 2073.8Q3383.5 2076.8 3383.5 2082.5" fill="none" stroke="#fff" stroke-width="7.2"/><circle cx="3383.5" cy="2089.2" r="4.4" fill="#fff"/></svg>
</body></html>
